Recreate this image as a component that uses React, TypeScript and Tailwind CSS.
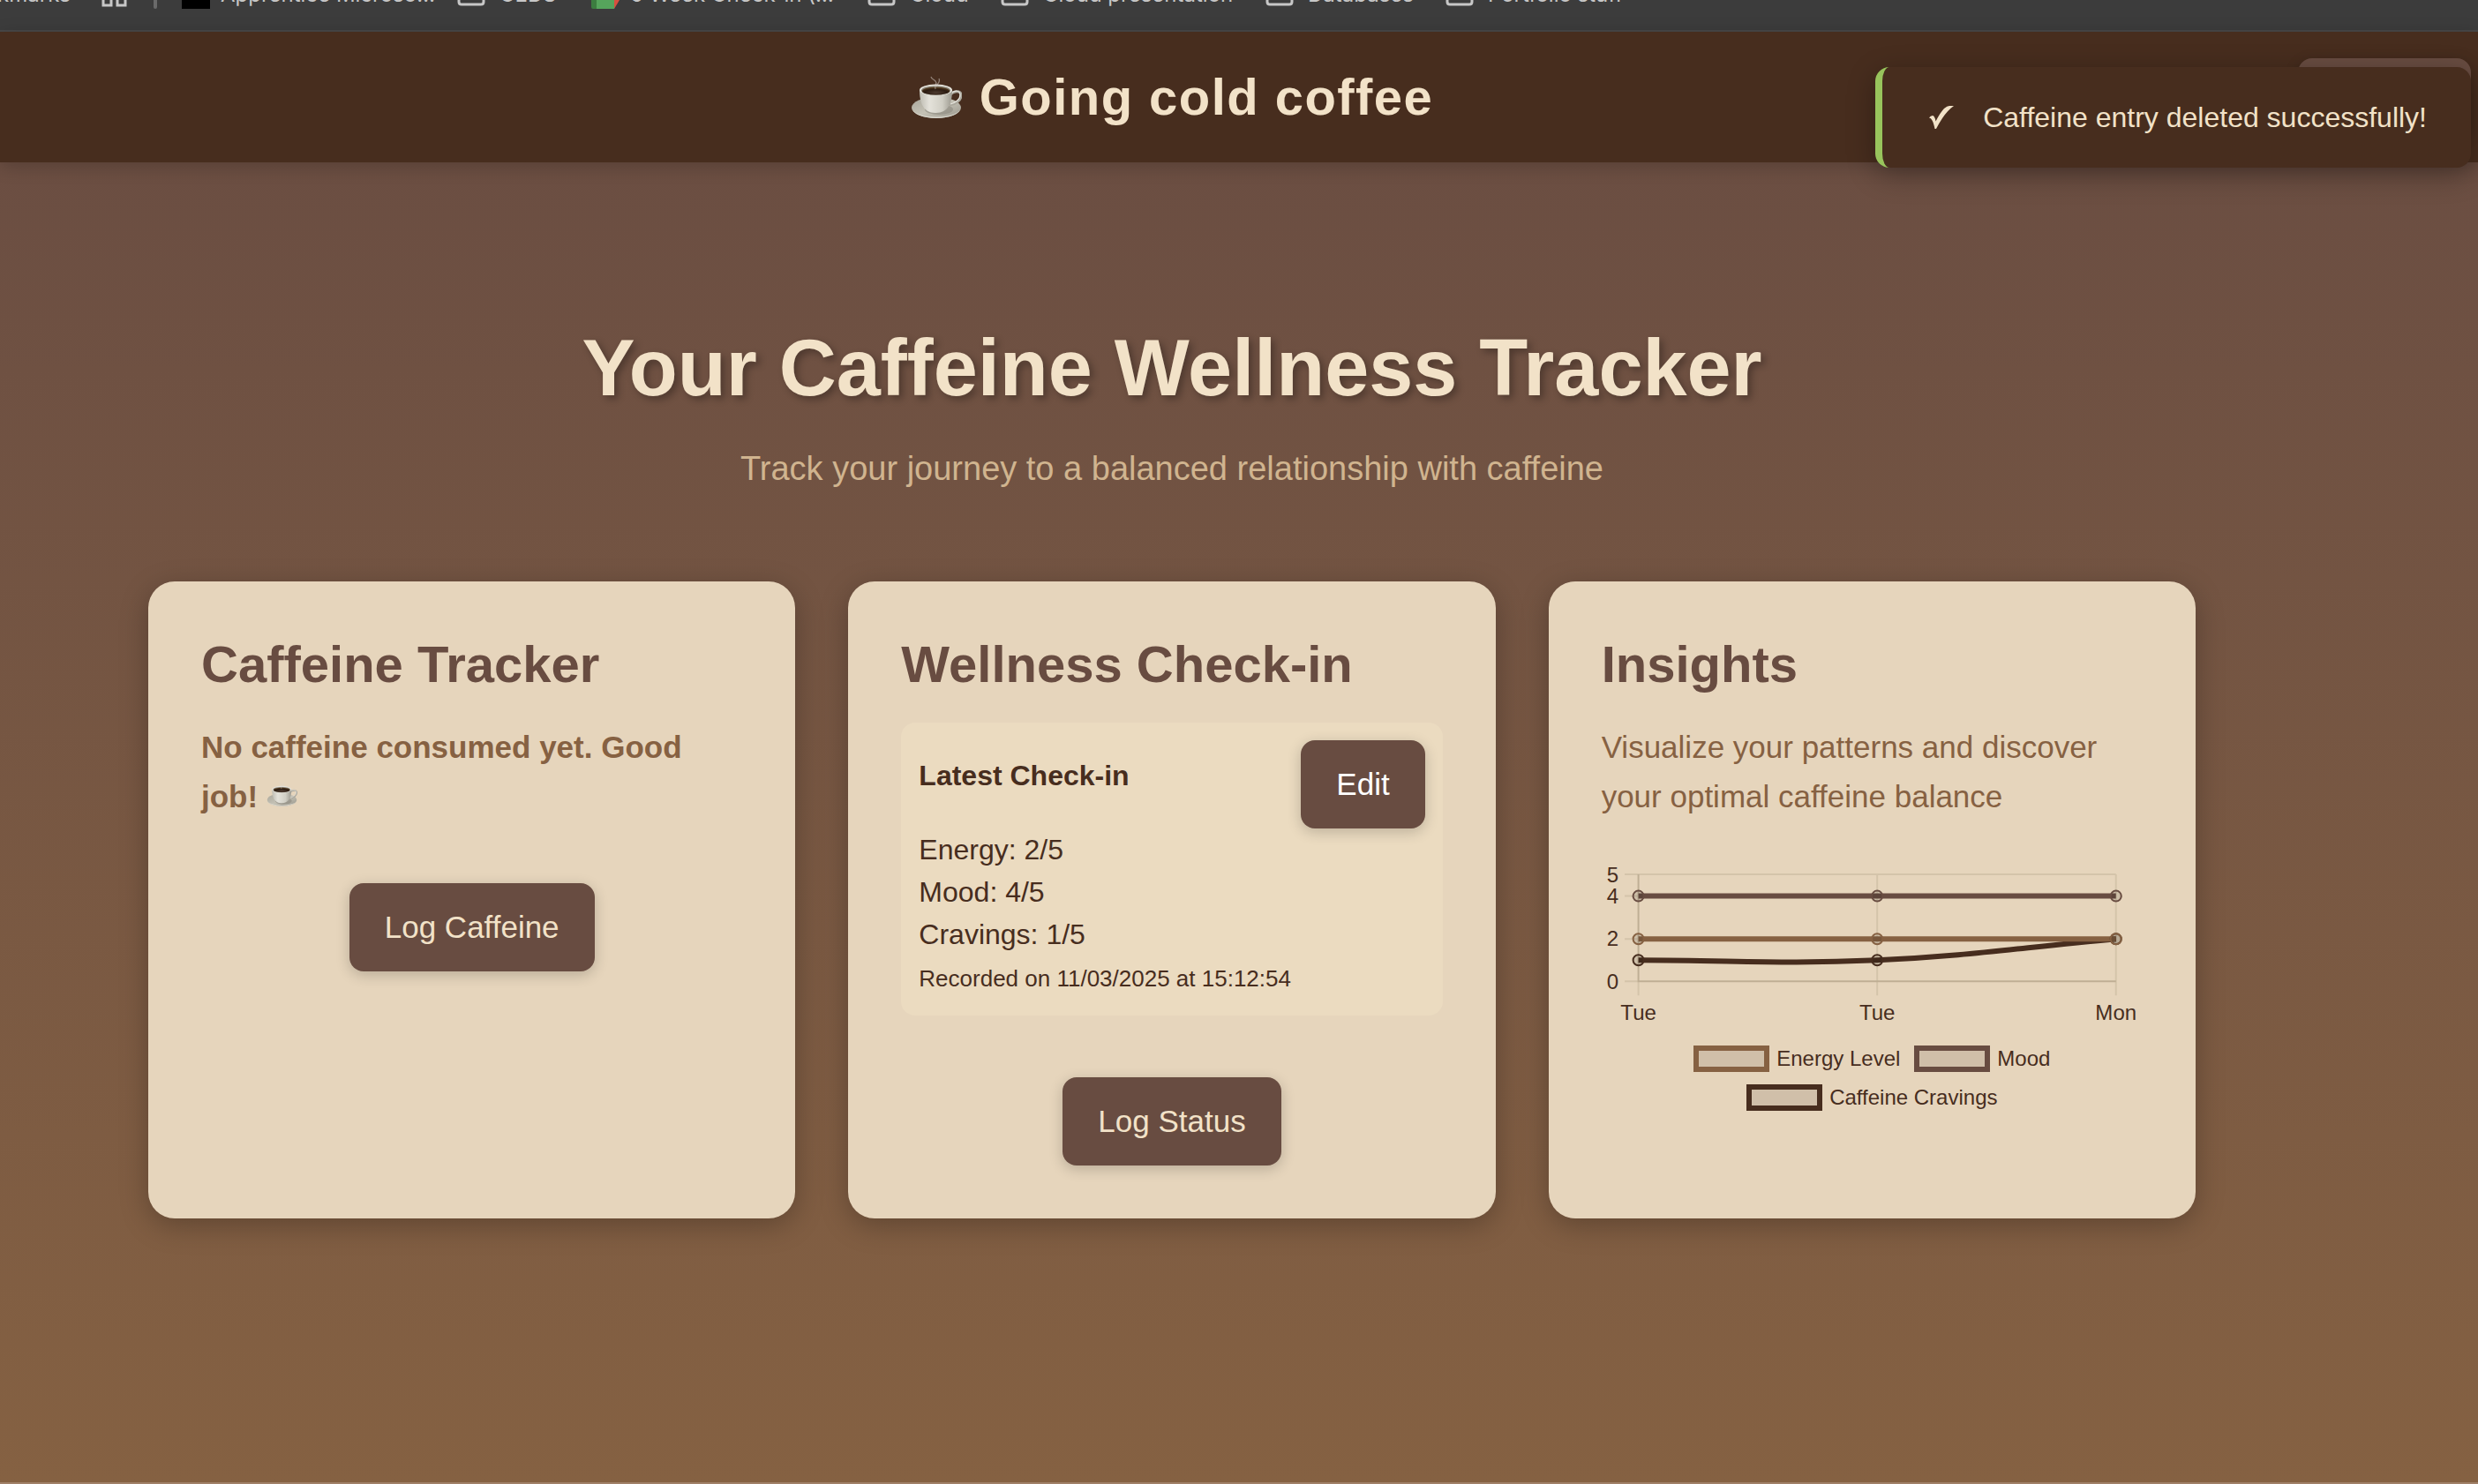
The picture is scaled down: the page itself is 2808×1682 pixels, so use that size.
import type { ReactNode } from "react";

function Cup({ className }: { className: string }) {
  return (
    <svg viewBox="0 0 58 52" className={className} role="img" aria-label="Cup of coffee">
      <defs>
        <linearGradient id="cupBody" x1="0" x2="1" y1="0" y2="0">
          <stop offset="0" stopColor="#bebcb2" />
          <stop offset="0.3" stopColor="#e4e2da" />
          <stop offset="0.7" stopColor="#d0cec4" />
          <stop offset="1" stopColor="#9c998f" />
        </linearGradient>
        <linearGradient id="saucer" x1="0" x2="1" y1="0" y2="1">
          <stop offset="0" stopColor="#a9a69a" />
          <stop offset="0.5" stopColor="#c4c1b5" />
          <stop offset="1" stopColor="#98958a" />
        </linearGradient>
        <radialGradient id="coffee" cx="0.5" cy="0.7" r="0.7">
          <stop offset="0" stopColor="#4d3b30" />
          <stop offset="0.6" stopColor="#2c1c12" />
          <stop offset="1" stopColor="#5b4020" />
        </radialGradient>
      </defs>
      <ellipse cx="29" cy="38" rx="28" ry="12" fill="url(#saucer)" />
      <path d="M1 38a28 12 0 0 0 56 0a28 10.500 0 0 1-56 0z" fill="#d8d6cc" />
      <ellipse cx="32" cy="40" rx="16" ry="6" fill="#8c897e" opacity="0.6" />
      <path d="M45 23c5-5 12-4 12 1c0 6-6 10-13 11" fill="none" stroke="#aaa79c" strokeWidth="3" />
      <path d="M45 22.500c5-5 11-4 11 1c0 5-5 9-11 10.500" fill="none" stroke="#e6e4dc" strokeWidth="1.200" />
      <path d="M10 18c0 14 4 26 18 26c15 0 19-12 19-26z" fill="url(#cupBody)" />
      <ellipse cx="28.500" cy="18" rx="18.500" ry="6.500" fill="#e6e4dc" />
      <ellipse cx="28.500" cy="18.500" rx="16.500" ry="5.200" fill="#857f72" />
      <ellipse cx="28.500" cy="19.200" rx="15.500" ry="4.400" fill="url(#coffee)" />
      <path d="M28 17c-2-5 3-6 0-9s-4-2-5-5M29 14c1-3 5-5 3-9" fill="none" stroke="#d9d2cb" strokeWidth="1.300" opacity="0.5" />
    </svg>
  );
}

function Folder() {
  return (
    <svg viewBox="0 0 32 32" className="h-8 w-8 shrink-0" fill="none" stroke="#c7c7c7" strokeWidth="3" aria-hidden="true">
      <path d="M2 7q0-3 3-3h7l4 4h11q3 0 3 3v13q0 3-3 3h-22q-3 0-3-3z" />
    </svg>
  );
}

function Bookmark({ icon, label, className }: { icon: ReactNode; label: string; className: string }) {
  return (
    <a href="#" className={"flex shrink-0 items-center whitespace-nowrap " + className}>
      {icon}
      {label}
    </a>
  );
}

function BookmarksBar() {
  return (
    <nav
      aria-label="Bookmarks"
      className="flex h-9 items-end overflow-hidden border-b-2 border-[#484848] bg-[#3c3c3c] pb-6 font-['Inter',sans-serif] text-2xl leading-8 text-[#c7c7c7]"
    >
      <div className="flex h-8 items-center">
        <a href="#" className="flex w-[115px] shrink-0 justify-end pr-[35px]">
          Bookmarks
        </a>
        <svg viewBox="0 0 30 32" className="mr-[29px] h-8 w-[30px] shrink-0" fill="none" stroke="#c7c7c7" strokeWidth="3" aria-hidden="true">
          <path d="M2 3h9v9h-9zM18 3h9v9h-9zM2 19h9v9h-9zM18 19h9v9h-9z" />
        </svg>
        <span className="mr-[28px] h-8 w-1 shrink-0 rounded-full bg-[#6a6a6a]" />
        <Bookmark className="w-[312px] gap-3" icon={<span className="h-8 w-8 shrink-0 bg-black" />} label="Apprentice Microso…" />
        <Bookmark className="w-[152px] gap-4" icon={<Folder />} label="CEDS" />
        <Bookmark
          className="w-[313px] gap-3"
          icon={
            <svg viewBox="0 0 32 32" className="h-8 w-8 shrink-0" aria-hidden="true">
              <path d="M0 0h26v26h-26z" fill="#4a80ee" />
              <path d="M6 6h20v16h-20z" fill="#fff" />
              <path d="M26 0h6v22h-6z" fill="#f5bf3d" />
              <path d="M6 22h20v10h-20z" fill="#56a55c" />
              <path d="M0 22h6v10h-4q-2 0-2-2z" fill="#3c7d40" />
              <path d="M26 22h6l-6 10z" fill="#d9503f" />
              <path d="M12 20h3M17 20h4" stroke="#4a80ee" strokeWidth="3" />
            </svg>
          }
          label="6 Week Check-in (…"
        />
        <Bookmark className="w-[151px] gap-4" icon={<Folder />} label="Cloud" />
        <Bookmark className="w-[300px] gap-4" icon={<Folder />} label="Cloud presentation" />
        <Bookmark className="w-[204px] gap-4" icon={<Folder />} label="Databases" />
        <Bookmark className="gap-4" icon={<Folder />} label="Portfolio stuff" />
      </div>
    </nav>
  );
}

function Header() {
  return (
    <header className="relative z-10 flex h-[148px] items-center bg-[#472d1e] pr-2 pl-[52px] shadow-[0_4px_20px_rgba(0,0,0,0.2)]">
      <div className="flex flex-1 items-center justify-center gap-5 text-[58px] leading-[92px] font-bold tracking-wide text-[#f2e2c8]">
        <Cup className="h-[52px] w-[58px]" />
        <h1>Going cold coffee</h1>
      </div>
      <button
        aria-label="Log out"
        className="h-[88px] w-[196px] rounded-2xl bg-[#684c41] shadow-[0_4px_16px_rgba(0,0,0,0.2)]"
      />
      <div
        role="status"
        className="absolute top-10 right-2 flex h-[114px] items-center gap-8 rounded-2xl border-l-8 border-[#98c45c] bg-[#472d1e] pr-[50px] pl-[52px] text-[32px] leading-[48px] text-[#f2e2c8] shadow-[0_8px_32px_rgba(0,0,0,0.3)]"
      >
        <svg viewBox="0 0 30 28" className="h-7 w-[30px]" fill="#f2e2c8" aria-hidden="true">
          <path d="M1 14.500Q2.500 12 5 12Q7.500 12.500 8.500 18.500Q14 8 18 4Q21.500 1 24 1H29Q22 6 16 15Q12 21 9 27H7.500Q6 20 4.500 17.500Q3 14.500 1 14.500z" />
        </svg>
        Caffeine entry deleted successfully!
      </div>
    </header>
  );
}

function Card({ title, children }: { title: string; children: ReactNode }) {
  return (
    <section className="flex flex-col items-start rounded-[30px] bg-[#e6d5bc] p-[60px] shadow-[0_8px_32px_rgba(0,0,0,0.25)]">
      <h3 className="mb-8 text-[58px] leading-[68px] font-bold text-[#684c41]">{title}</h3>
      {children}
    </section>
  );
}

function Button({ children, className }: { children: ReactNode; className: string }) {
  return (
    <button
      className={
        "rounded-2xl bg-[#684c41] px-10 py-[22px] text-[35px] leading-[56px] shadow-[0_4px_16px_rgba(0,0,0,0.2)] " + className
      }
    >
      {children}
    </button>
  );
}

function Chart() {
  return (
    <svg
      viewBox="0 0 612 200"
      role="img"
      aria-label="Energy level, mood and caffeine cravings by day"
      className="mt-[38px] w-full fill-[#472d1e] text-2xl"
    >
      <g stroke="#d4c4aa" strokeWidth="2">
        <path d="M26 22H581.500M26 46.500H41M26 95H41M26 143H41M311.500 22V159M581.500 22V159M41.500 143V159" />
        <path d="M41.500 22V143H581.500" fill="none" stroke="#bfae94" />
      </g>
      <g textAnchor="end">
        <text x="19" y="31">5</text>
        <text x="19" y="55">4</text>
        <text x="19" y="103">2</text>
        <text x="19" y="152">0</text>
      </g>
      <g textAnchor="middle">
        <text x="41.500" y="187">Tue</text>
        <text x="311.500" y="187">Tue</text>
        <text x="581.500" y="187">Mon</text>
      </g>
      <g fill="none" strokeWidth="6">
        <path stroke="#472d1e" d="M41.500 119C149.500 119 203.500 123.800 311.500 119C419.500 114.200 473.500 104.600 581.500 95" />
        <path stroke="#684c41" d="M41.500 46.500H581.500" />
        <path stroke="#866142" d="M41.500 95H581.500" />
      </g>
      <g fill="rgba(0,0,0,0.1)" strokeWidth="2">
        <g stroke="#472d1e">
          <circle cx="41.500" cy="119" r="6" />
          <circle cx="311.500" cy="119" r="6" />
          <circle cx="581.500" cy="95" r="6" />
        </g>
        <g stroke="#684c41">
          <circle cx="41.500" cy="46.500" r="6" />
          <circle cx="311.500" cy="46.500" r="6" />
          <circle cx="581.500" cy="46.500" r="6" />
        </g>
        <g stroke="#866142">
          <circle cx="41.500" cy="95" r="6" />
          <circle cx="311.500" cy="95" r="6" />
          <circle cx="581.500" cy="95" r="6" />
        </g>
      </g>
    </svg>
  );
}

const legend = [
  { label: "Energy Level", swatch: "border-[#866142]" },
  { label: "Mood", swatch: "border-[#684c41]" },
  { label: "Caffeine Cravings", swatch: "border-[#472d1e]" },
];

export default function App() {
  return (
    <div className="flex min-h-screen flex-col border-b-2 border-[#a08068] font-['Liberation_Sans',Arial,sans-serif]">
      <BookmarksBar />
      <Header />
      <main className="flex-1 bg-linear-to-b from-[#6b4e42] to-[#856142] pt-[179px] pr-[152px] pb-20">
        <div className="mx-auto max-w-[2320px]">
          <h2 className="text-center text-[90px] leading-[108px] font-bold text-[#f2e2c8] [text-shadow:4px_4px_8px_rgba(0,0,0,0.3)]">
            Your Caffeine Wellness Tracker
          </h2>
          <p className="mt-[29px] mb-[97px] text-center text-[38px] leading-[62px] text-[#d0b48f]">
            Track your journey to a balanced relationship with caffeine
          </p>
          <div className="grid grid-cols-3 gap-[60px]">
            <Card title="Caffeine Tracker">
              <p className="mb-[70px] text-[35px] leading-[56px] font-bold text-[#866142]">
                No caffeine consumed yet. Good job! <Cup className="inline h-[31px] w-[35px] align-baseline" />
              </p>
              <Button className="self-center text-[#f2e2c8]">Log Caffeine</Button>
            </Card>

            <Card title="Wellness Check-in">
              <div className="mb-[70px] w-full rounded-2xl bg-[#ebdbc0] p-5 text-[32px] leading-[48px] text-[#472d1e]">
                <div className="flex items-center justify-between">
                  <h4 className="mb-5 font-bold">Latest Check-in</h4>
                  <Button className="text-white">Edit</Button>
                </div>
                <p>Energy: 2/5</p>
                <p>Mood: 4/5</p>
                <p>Cravings: 1/5</p>
                <p>
                  <small className="text-[26px] leading-none">Recorded on 11/03/2025 at 15:12:54</small>
                </p>
              </div>
              <Button className="self-center text-[#f2e2c8]">Log Status</Button>
            </Card>

            <Card title="Insights">
              <p className="text-[35px] leading-[56px] text-[#866142]">
                Visualize your patterns and discover your optimal caffeine balance
              </p>
              <Chart />
              <ul className="mt-4 flex w-full flex-wrap justify-center gap-x-4 gap-y-3.5 px-20 text-2xl leading-[30px] text-[#472d1e]">
                {legend.map((item) => (
                  <li key={item.label} className="flex items-center gap-2">
                    <span className={"h-[30px] w-[86px] border-[6px] bg-[#d0bfa9] " + item.swatch} />
                    {item.label}
                  </li>
                ))}
              </ul>
            </Card>
          </div>
        </div>
      </main>
    </div>
  );
}
